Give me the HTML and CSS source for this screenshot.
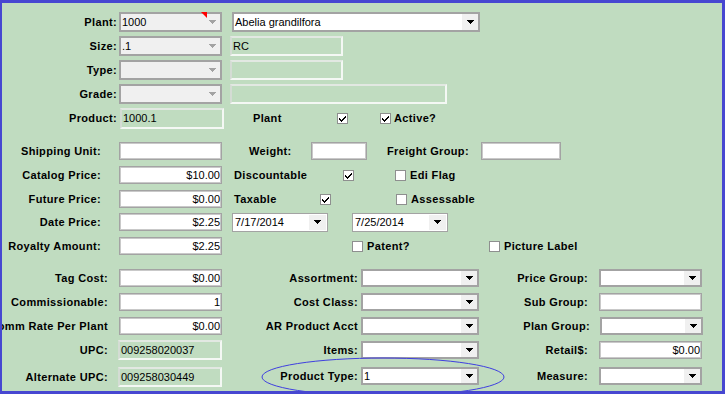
FILE: index.html
```html
<!DOCTYPE html>
<html>
<head>
<meta charset="utf-8">
<link rel="stylesheet" href="styles.css">
</head>
<body>
<div class="win">
  <div class="s1">
    <div class="row">
      <span class="lbl">Plant:</span>
      <div class="combo dis w103"><span class="val">1000</span><span class="btn"><svg width="7" height="4" viewBox="0 0 7 4"><path d="M0 0h7v1h-1v1h-1v1h-1v1h-1v-1h-1v-1h-1v-1h-1z"/></svg></span><i class="flag"></i></div>
      <div class="combo w248 ml10"><span class="val">Abelia grandilfora</span><span class="btn"><svg width="7" height="4" viewBox="0 0 7 4"><path d="M0 0h7v1h-1v1h-1v1h-1v1h-1v-1h-1v-1h-1v-1h-1z"/></svg></span></div>
    </div>
    <div class="row">
      <span class="lbl">Size:</span>
      <div class="combo dis w103"><span class="val">.1</span><span class="btn"><svg width="7" height="4" viewBox="0 0 7 4"><path d="M0 0h7v1h-1v1h-1v1h-1v1h-1v-1h-1v-1h-1v-1h-1z"/></svg></span></div>
      <div class="ro w113 ml8">RC</div>
    </div>
    <div class="row">
      <span class="lbl">Type:</span>
      <div class="combo dis w103"><span class="val"></span><span class="btn"><svg width="7" height="4" viewBox="0 0 7 4"><path d="M0 0h7v1h-1v1h-1v1h-1v1h-1v-1h-1v-1h-1v-1h-1z"/></svg></span></div>
      <div class="ro w113 ml8"></div>
    </div>
    <div class="row">
      <span class="lbl">Grade:</span>
      <div class="combo dis w103"><span class="val"></span><span class="btn"><svg width="7" height="4" viewBox="0 0 7 4"><path d="M0 0h7v1h-1v1h-1v1h-1v1h-1v-1h-1v-1h-1v-1h-1z"/></svg></span></div>
      <div class="ro w217 ml8"></div>
    </div>
    <div class="row">
      <span class="lbl">Product:</span>
      <div class="ro w104 prod">1000.1</div>
      <span class="txt c-plant">Plant</span>
      <span class="chk on"><svg width="9" height="9" viewBox="0 0 9 9"><path d="M1 4h1v1h1v1h1v-1h1v-1h1v-1h1v-1h1v2h-1v1h-1v1h-1v1h-1v1h-1v-1h-1v-1h-1z"/></svg></span>
      <span class="chk on ml32"><svg width="9" height="9" viewBox="0 0 9 9"><path d="M1 4h1v1h1v1h1v-1h1v-1h1v-1h1v-1h1v2h-1v1h-1v1h-1v1h-1v1h-1v-1h-1v-1h-1z"/></svg></span>
      <span class="txt ml3">Active?</span>
    </div>
  </div>

  <div class="s2">
    <div class="row">
      <span class="lbl">Shipping Unit:</span>
      <div class="inp w103"></div>
      <span class="txt c-weight">Weight:</span>
      <div class="inp w56"></div>
      <span class="txt c-freight">Freight Group:</span>
      <div class="inp w80"></div>
    </div>
    <div class="row">
      <span class="lbl">Catalog Price:</span>
      <div class="inp w103">$10.00</div>
      <span class="txt c-disc">Discountable</span>
      <span class="chk on"><svg width="9" height="9" viewBox="0 0 9 9"><path d="M1 4h1v1h1v1h1v-1h1v-1h1v-1h1v-1h1v2h-1v1h-1v1h-1v1h-1v1h-1v-1h-1v-1h-1z"/></svg></span>
      <span class="chk ml41"></span>
      <span class="txt ml4">Edi Flag</span>
    </div>
    <div class="row">
      <span class="lbl">Future Price:</span>
      <div class="inp w103">$0.00</div>
      <span class="txt c-tax">Taxable</span>
      <span class="chk on"><svg width="9" height="9" viewBox="0 0 9 9"><path d="M1 4h1v1h1v1h1v-1h1v-1h1v-1h1v-1h1v2h-1v1h-1v1h-1v1h-1v1h-1v-1h-1v-1h-1z"/></svg></span>
      <span class="chk ml65"></span>
      <span class="txt ml4">Assessable</span>
    </div>
    <div class="row r4">
      <span class="lbl">Date Price:</span>
      <div class="inp w103">$2.25</div>
      <div class="date ml10"><span class="val">7/17/2014</span><span class="btn"><svg width="7" height="4" viewBox="0 0 7 4"><path d="M0 0h7v1h-1v1h-1v1h-1v1h-1v-1h-1v-1h-1v-1h-1z"/></svg></span></div>
      <div class="date ml24"><span class="val">7/25/2014</span><span class="btn"><svg width="7" height="4" viewBox="0 0 7 4"><path d="M0 0h7v1h-1v1h-1v1h-1v1h-1v-1h-1v-1h-1v-1h-1z"/></svg></span></div>
    </div>
    <div class="row">
      <span class="lbl">Royalty Amount:</span>
      <div class="inp w103">$2.25</div>
      <span class="chk ml130"></span>
      <span class="txt c-patent">Patent?</span>
      <span class="chk"></span>
      <span class="txt ml4">Picture Label</span>
    </div>
  </div>

  <div class="s3">
    <span class="lbl l1">Tag Cost:</span>
    <div class="inp w103">$0.00</div>
    <span class="lbl l2">Assortment:</span>
    <div class="combo h18 w118"><span class="val"></span><span class="btn"><svg width="7" height="4" viewBox="0 0 7 4"><path d="M0 0h7v1h-1v1h-1v1h-1v1h-1v-1h-1v-1h-1v-1h-1z"/></svg></span></div>
    <span class="lbl l1">Price Group:</span>
    <div class="combo h18 w103"><span class="val"></span><span class="btn"><svg width="7" height="4" viewBox="0 0 7 4"><path d="M0 0h7v1h-1v1h-1v1h-1v1h-1v-1h-1v-1h-1v-1h-1z"/></svg></span></div>

    <span class="lbl l1">Commissionable:</span>
    <div class="inp w103">1</div>
    <span class="lbl l2">Cost Class:</span>
    <div class="combo h18 w118"><span class="val"></span><span class="btn"><svg width="7" height="4" viewBox="0 0 7 4"><path d="M0 0h7v1h-1v1h-1v1h-1v1h-1v-1h-1v-1h-1v-1h-1z"/></svg></span></div>
    <span class="lbl l1">Sub Group:</span>
    <div class="inp w103"></div>

    <span class="lbl l1">Comm Rate Per Plant</span>
    <div class="inp w103">$0.00</div>
    <span class="lbl l2">AR Product Acct</span>
    <div class="combo h18 w118"><span class="val"></span><span class="btn"><svg width="7" height="4" viewBox="0 0 7 4"><path d="M0 0h7v1h-1v1h-1v1h-1v1h-1v-1h-1v-1h-1v-1h-1z"/></svg></span></div>
    <span class="lbl l1 lp">Plan Group:</span>
    <div class="combo h18 w103 cp"><span class="val"></span><span class="btn"><svg width="7" height="4" viewBox="0 0 7 4"><path d="M0 0h7v1h-1v1h-1v1h-1v1h-1v-1h-1v-1h-1v-1h-1z"/></svg></span></div>

    <span class="lbl l1 tall">UPC:</span>
    <div class="ro w104 h20">009258020037</div>
    <span class="lbl l2 dn1">Items:</span>
    <div class="combo h18 w118 dn1"><span class="val"></span><span class="btn"><svg width="7" height="4" viewBox="0 0 7 4"><path d="M0 0h7v1h-1v1h-1v1h-1v1h-1v-1h-1v-1h-1v-1h-1z"/></svg></span></div>
    <span class="lbl l1 dn1">Retail$:</span>
    <div class="inp w103 dn1">$0.00</div>

    <span class="lbl l1 tall">Alternate UPC:</span>
    <div class="ro w104 h20">009258030449</div>
    <span class="lbl l2">Product Type:</span>
    <div class="combo h18 w118"><span class="val">1</span><span class="btn"><svg width="7" height="4" viewBox="0 0 7 4"><path d="M0 0h7v1h-1v1h-1v1h-1v1h-1v-1h-1v-1h-1v-1h-1z"/></svg></span></div>
    <span class="lbl l1">Measure:</span>
    <div class="combo h18 w103"><span class="val"></span><span class="btn"><svg width="7" height="4" viewBox="0 0 7 4"><path d="M0 0h7v1h-1v1h-1v1h-1v1h-1v-1h-1v-1h-1v-1h-1z"/></svg></span></div>
  </div>

  <svg class="ring" width="250" height="50" viewBox="0 0 250 50"><ellipse cx="125" cy="22" rx="121" ry="19" fill="none" stroke="#3f3fe0" stroke-width="1"/></svg>
</div>
</body>
</html>
```

FILE: styles.css
```css
* { box-sizing: border-box; }
body { margin: 0; }

.win {
  width: 725px;
  height: 394px;
  border: 3px solid #4747d1;
  border-left-width: 2px;
  background: #c0dcc0;
  position: relative;
  overflow: hidden;
  font-family: "Liberation Sans", Arial, sans-serif;
  font-size: 11px;
  color: #000;
}

.lbl { font-weight: bold; white-space: nowrap; text-align: right; letter-spacing: 0.35px; }
.txt { font-weight: bold; white-space: nowrap; letter-spacing: 0.35px; }
.row { display: flex; align-items: center; }

/* section 1 */
.s1 { padding-top: 9px; display: flex; flex-direction: column; gap: 4px; }
.s1 .row { height: 20px; }
.s1 .lbl { width: 115px; margin-right: 2px; }

/* section 2 */
.s2 { margin-top: 14px; display: flex; flex-direction: column; gap: 6px; }
.s2 .row { height: 18px; }
.s2 .row.r4 { margin-top: -1px; }
.s2 .lbl { width: 99px; margin-right: 18px; }

/* section 3 */
.s3 {
  margin-top: 14px;
  display: grid;
  grid-template-columns: 117px 103px 139px 118px 120px 103px;
  grid-template-rows: 24px 24px 23px 27px 20px;
  align-items: start;
}
.s3 .lbl {
  height: 18px;
  line-height: 18px;
  display: flex;
  justify-content: flex-end;
  overflow: hidden;
}
.s3 .l1 { padding-right: 11px; }
.s3 .l2 { padding-right: 3px; }
.s3 .lp { padding-right: 9px; }
.s3 .cp { margin-left: 1px; }
.s3 .tall { height: 20px; line-height: 21px; }
.dn1 { margin-top: 1px; }

/* widths & spacing */
.w56 { width: 56px; }
.w80 { width: 80px; }
.w103 { width: 103px; }
.w104 { width: 104px; }
.w113 { width: 113px; }
.w118 { width: 118px; }
.w217 { width: 217px; }
.w248 { width: 248px; }
.ml3 { margin-left: 3px; }
.ml4 { margin-left: 4px; }
.ml8 { margin-left: 8px; }
.ml10 { margin-left: 10px; }
.ml24 { margin-left: 24px; }
.ml32 { margin-left: 32px; }
.ml41 { margin-left: 41px; }
.ml65 { margin-left: 65px; }
.ml130 { margin-left: 130px; }

.c-plant { margin-left: 29px; width: 84px; }
.c-weight { margin-left: 27px; width: 62px; }
.c-freight { margin-left: 20px; width: 94px; }
.c-disc { margin-left: 12px; width: 109px; }
.c-tax { margin-left: 12px; width: 86px; }
.c-patent { margin-left: 4px; width: 122px; }

/* combo box */
.combo {
  position: relative;
  display: flex;
  height: 20px;
  border: 2px solid #a3a3a3;
  background: #fff;
  font-weight: normal;
}
.combo.h18 { height: 18px; }
.combo .val { flex: 1; padding-left: 1px; line-height: 16px; white-space: nowrap; }
.combo.h18 .val { line-height: 14px; }
.combo .btn {
  width: 16px;
  background: #f0f0f0;
  display: flex;
  align-items: center;
  justify-content: center;
}
.combo .btn svg { fill: #000; display: block; }
.combo.dis { background: #f0f0f0; }
.combo.dis .btn svg { fill: #a3a3a3; }
.flag {
  position: absolute;
  top: -2px;
  right: 13px;
  width: 6px;
  height: 6px;
  background: #f00;
  clip-path: polygon(0 0, 100% 0, 100% 100%);
}

/* date picker */
.date {
  display: flex;
  width: 96px;
  height: 19px;
  border: 1px solid #a3a3a3;
  background: #fff;
}
.date .val { flex: 1; padding-left: 2px; line-height: 17px; }
.date .btn {
  width: 17px;
  margin: 1px 1px 1px 0;
  background: #f0f0f0;
  display: flex;
  align-items: center;
  justify-content: center;
}
.date .btn svg { fill: #000; display: block; }

/* text input */
.inp {
  height: 18px;
  border: 1px solid #a3a3a3;
  box-shadow: inset 0 0 0 1px #c9c9c9;
  background: #fff;
  text-align: right;
  line-height: 16px;
  padding-right: 1px;
}

/* read-only green box */
.ro {
  height: 20px;
  border: 2px solid #f4f8f4;
  border-top-color: #e2e8e2;
  border-left-color: #d4dcd4;
  line-height: 16px;
  padding-left: 1px;
}
.ro.prod { height: 21px; margin-left: 1px; }
.ro.h20 { height: 20px; }
.s3 .ro { margin-left: -1px; }

/* checkbox */
.chk {
  width: 11px;
  height: 11px;
  border: 1px solid #8e8f8f;
  background: #fff;
  display: flex;
  align-items: center;
  justify-content: center;
  flex: none;
}
.chk svg { display: block; fill: #000; }

/* annotation ring */
.ring {
  position: absolute;
  left: 256px;
  top: 352px;
  pointer-events: none;
}
```
